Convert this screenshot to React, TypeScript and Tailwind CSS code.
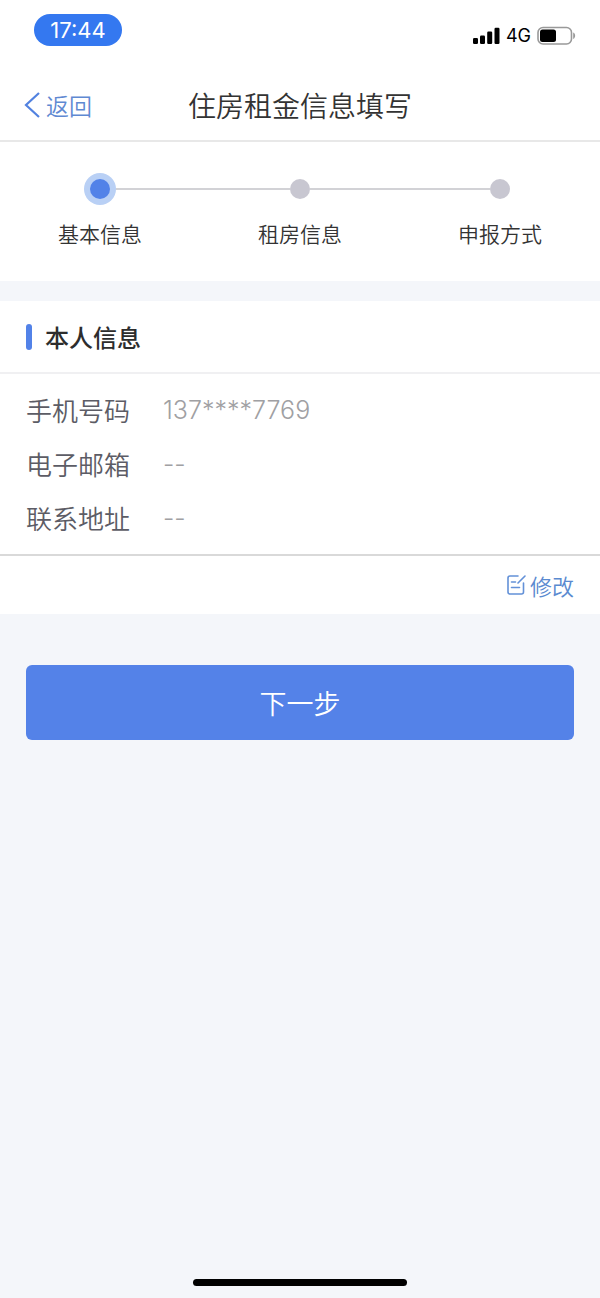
import React from 'react';

interface InfoRow {
  label: string;
  value: string;
}

const STEPS = ['基本信息', '租房信息', '申报方式'];

const ROWS: InfoRow[] = [
  { label: '手机号码', value: '137****7769' },
  { label: '电子邮箱', value: '--' },
  { label: '联系地址', value: '--' },
];

const StatusBar: React.FC = () => (
  <div className="h-[70px] flex justify-between items-start pl-[34px] pr-6">
    <span className="mt-[14px] h-8 w-[88px] flex items-center justify-center rounded-full bg-[#3478f0] text-white text-[22px] leading-8 font-normal font-['Inter',sans-serif]">
      17:44
    </span>
    <div className="mt-6 h-6 flex items-center gap-[6px]">
      <svg width="28" height="18" viewBox="0 0 28 18" fill="#000">
        <rect x="1" y="11" width="5" height="6" rx="1.2" />
        <rect x="8" y="8.5" width="5" height="8.5" rx="1.2" />
        <rect x="15.2" y="4.5" width="5" height="12.5" rx="1.2" />
        <rect x="22.5" y="0.8" width="5" height="16.2" rx="1.2" />
      </svg>
      <span className="text-lg leading-6 font-normal text-black font-['Inter',sans-serif]">4G</span>
      <svg width="39" height="20" viewBox="0 0 39 20" fill="none">
        <rect x="1" y="1.5" width="33.5" height="16.5" rx="5" stroke="#999" strokeWidth="1.6" />
        <rect x="3" y="3.5" width="16" height="12.5" rx="2.5" fill="#000" />
        <path d="M36.2 6.5c2.6 1 2.6 5.4 0 6.4z" fill="#999" />
      </svg>
    </div>
  </div>
);

const Stepper: React.FC = () => (
  <ol className="bg-white grid grid-cols-3 pt-[31px] pb-8">
    {STEPS.map((step, i) => (
      <li key={step} className="flex flex-col items-center">
        <div className="w-full h-8 flex items-center">
          <span className={`flex-1 h-[2px] ${i > 0 ? 'bg-[#d2d2d6]' : ''}`} />
          {i === 0 ? (
            <span className="size-8 rounded-full bg-[#b9d0f5] flex items-center justify-center">
              <span className="size-5 rounded-full bg-[#5282e8]" />
            </span>
          ) : (
            <span className="size-5 rounded-full bg-[#c8c7d1]" />
          )}
          <span className={`flex-1 h-[2px] ${i < STEPS.length - 1 ? 'bg-[#d2d2d6]' : ''}`} />
        </div>
        <span className="mt-3 text-[21px] leading-8 text-[#333]">{step}</span>
      </li>
    ))}
  </ol>
);

const App: React.FC = () => {
  return (
    <div className="min-h-screen flex flex-col bg-[#f4f6fa] font-['Noto_Sans_CJK_SC',sans-serif] font-[350]">
      <header className="bg-white border-b-2 border-[#e8e8e8]">
        <StatusBar />
        <div className="h-[70px] grid grid-cols-[1fr_auto_1fr] items-center px-6">
          <button type="button" className="justify-self-start flex items-center gap-[6px] text-[#5f89d2] text-[23px] leading-8">
            <svg width="16" height="28" viewBox="0 0 16 28" fill="none" stroke="#5282e0" strokeWidth="2.2">
              <path d="M15 2L2 14l13 12" />
            </svg>
            返回
          </button>
          <h1 className="text-[28px] leading-10 font-[350] text-[#333]">住房租金信息填写</h1>
        </div>
      </header>

      <Stepper />

      <section className="mt-5 bg-white">
        <div className="h-[73px] flex items-center gap-[13px] px-[26px] border-b-2 border-[#f0f0f2]">
          <span className="w-[6px] h-[26px] rounded-full bg-[#5282e8]" />
          <h2 className="text-2xl leading-8 font-medium text-[#2d2d2d]">本人信息</h2>
        </div>
        <dl className="px-[26px] pt-[9px] pb-[9px] border-b-2 border-[#d9d9d9]">
          {ROWS.map((row) => (
            <div key={row.label} className="h-[54px] flex items-center">
              <dt className="w-[137px] text-[26px] leading-10 text-[#5c5c65]">{row.label}</dt>
              <dd className="text-[25px] leading-10 text-[#a0a0a3] font-['Inter',sans-serif]">{row.value}</dd>
            </div>
          ))}
        </dl>
        <div className="h-[58px] flex items-center justify-end px-[26px]">
          <button type="button" className="flex items-center gap-1 text-[#5a8ad0] text-[22px] leading-8">
            <svg width="19" height="22" viewBox="0 0 19 22" fill="none" stroke="#6391d8" strokeWidth="1.6" strokeLinecap="round" strokeLinejoin="round">
              <path d="M11 2H3Q1 2 1 4v14q0 2 2 2h11.500q2 0 2-2V9" />
              <path d="M18 2l-7 7M4.500 8h4M4.500 13.500h8" />
            </svg>
            修改
          </button>
        </div>
      </section>

      <div className="px-[26px] mt-[51px]">
        <button type="button" className="w-full h-[75px] rounded-md bg-[#5482e8] text-white text-[27px] leading-10">
          下一步
        </button>
      </div>

      <div className="mt-auto mb-3 mx-auto w-[214px] h-[7px] rounded-full bg-black" />
    </div>
  );
};

export default App;
